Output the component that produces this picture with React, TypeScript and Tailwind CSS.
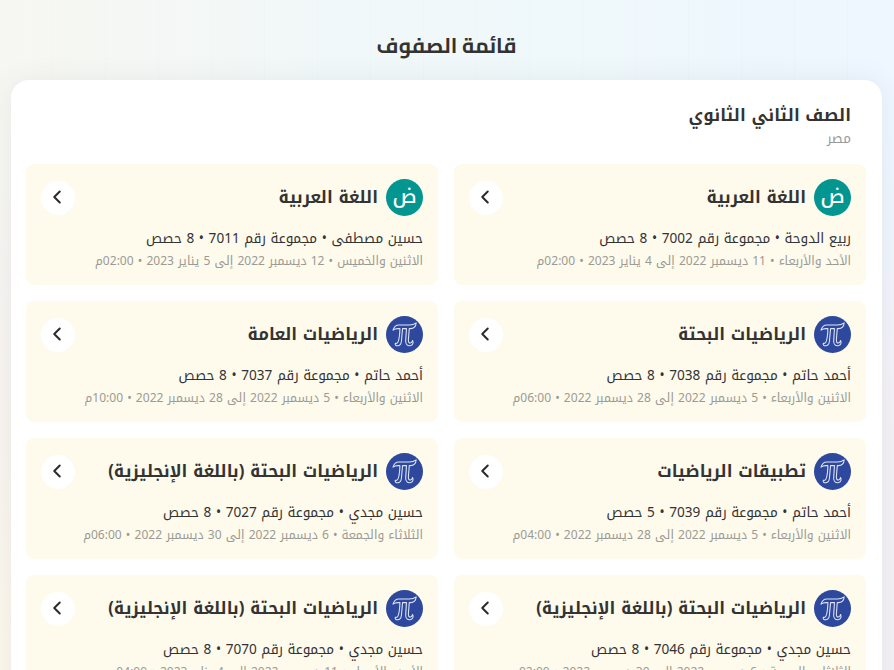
import { ChevronLeft } from "lucide-react";

type Subject = "arabic" | "math";
type Group = { subject: Subject; title: string; info: string; schedule: string };

const groups: Group[] = [
  { subject: "arabic", title: "اللغة العربية", info: "ربيع الدوحة • مجموعة رقم 7002 • 8 حصص", schedule: "الأحد والأربعاء • 11 ديسمبر 2022 إلى 4 يناير 2023 • 02:00م" },
  { subject: "arabic", title: "اللغة العربية", info: "حسين مصطفى • مجموعة رقم 7011 • 8 حصص", schedule: "الاثنين والخميس • 12 ديسمبر 2022 إلى 5 يناير 2023 • 02:00م" },
  { subject: "math", title: "الرياضيات البحتة", info: "أحمد حاتم • مجموعة رقم 7038 • 8 حصص", schedule: "الاثنين والأربعاء • 5 ديسمبر 2022 إلى 28 ديسمبر 2022 • 06:00م" },
  { subject: "math", title: "الرياضيات العامة", info: "أحمد حاتم • مجموعة رقم 7037 • 8 حصص", schedule: "الاثنين والأربعاء • 5 ديسمبر 2022 إلى 28 ديسمبر 2022 • 10:00م" },
  { subject: "math", title: "تطبيقات الرياضيات", info: "أحمد حاتم • مجموعة رقم 7039 • 5 حصص", schedule: "الاثنين والأربعاء • 5 ديسمبر 2022 إلى 28 ديسمبر 2022 • 04:00م" },
  { subject: "math", title: "الرياضيات البحتة (باللغة الإنجليزية)", info: "حسين مجدي • مجموعة رقم 7027 • 8 حصص", schedule: "الثلاثاء والجمعة • 6 ديسمبر 2022 إلى 30 ديسمبر 2022 • 06:00م" },
  { subject: "math", title: "الرياضيات البحتة (باللغة الإنجليزية)", info: "حسين مجدي • مجموعة رقم 7046 • 8 حصص", schedule: "الثلاثاء والجمعة • 6 ديسمبر 2022 إلى 30 ديسمبر 2022 • 02:00م" },
  { subject: "math", title: "الرياضيات البحتة (باللغة الإنجليزية)", info: "حسين مجدي • مجموعة رقم 7070 • 8 حصص", schedule: "الأحد والأربعاء • 11 ديسمبر 2022 إلى 4 يناير 2023 • 04:00م" },
];

function SubjectIcon({ subject }: { subject: Subject }) {
  if (subject === "arabic") {
    return (
      <span className="flex size-[37px] shrink-0 items-center justify-center rounded-full bg-[#039590] text-[20px] leading-[30px] font-medium text-white">
        <span className="-mt-1">ض</span>
      </span>
    );
  }
  return (
    <svg viewBox="0 0 38 38" className="size-[37px] shrink-0" fill="none">
      <circle cx="19" cy="19" r="19" fill="#2d489d" />
      <path
        d="M7.2 14.6C8.2 10.7 9.9 9.2 13.2 9.2H24C27 9.2 28.8 8.6 31 7C30.7 11.2 28.4 13 25 13H23.9L23 24.3C22.8 26.8 23.7 28 25.2 27.7C26.7 27.4 26.9 26.2 27.3 25.2C28.5 27.4 27.5 29.6 25.4 30.4C22.4 31.3 20 29.3 20.2 25.8L21 13H17L15.8 26.2C15.4 29 14.1 30.6 12 30.6C9.9 30.6 9 29.4 9.6 28C10.4 28.3 11.6 28 12.3 26.6C13.5 24 14.1 18.6 14.3 13H12.3C9.8 13 8.6 13.4 7.2 14.6Z"
        stroke="#dfe5f6"
        strokeWidth="1.1"
        strokeLinejoin="round"
      />
    </svg>
  );
}

function GroupCard({ group }: { group: Group }) {
  return (
    <article className="h-[121px] rounded-lg bg-[#fefaec] px-[15px] pt-[15px]">
      <div className="flex h-[37px] items-center gap-2">
        <SubjectIcon subject={group.subject} />
        <h3 className="grow scale-y-[1.04] text-[16.7px] leading-7 font-bold">{group.title}</h3>
        <span className="flex size-[34px] items-center justify-center rounded-full bg-white">
          <ChevronLeft className="mr-0.5 mb-0.5 size-[22px] text-[#2b2b2b]" strokeWidth={2.2} />
        </span>
      </div>
      <p className="mt-[11px] scale-y-[1.04] text-[13.6px] leading-[23px]">{group.info}</p>
      <p className="scale-y-[1.04] text-[12.06px] leading-[22px] text-[#9b9a94]">{group.schedule}</p>
    </article>
  );
}

export default function App() {
  return (
    <div
      dir="rtl"
      className="h-[670px] overflow-hidden bg-[repeating-linear-gradient(to_right,transparent_0px,transparent_52px,rgba(90,120,120,0.018)_52px,rgba(90,120,120,0.018)_53px),radial-gradient(ellipse_at_0%_95%,#fbf7ec_0%,transparent_50%),linear-gradient(to_bottom,transparent_20%,#f4f1f6_65%),linear-gradient(to_right,#f7f7f2_0%,#f1f8f9_40%,#eff8fb_68%,#eef6ff_95%)] pr-3 pl-[11px] font-['Noto_Kufi_Arabic','Noto_Sans',sans-serif] text-[#333]"
    >
      <h1 className="flex h-20 items-center justify-center pt-[11px] font-['Cairo','Noto_Kufi_Arabic',sans-serif] text-[21px] font-bold">
        قائمة الصفوف
      </h1>
      <main className="h-[640px] rounded-[18px] bg-white px-4 pt-[22px] pl-[15px] shadow-[0_0_28px_rgba(60,80,80,0.08)]">
        <header className="h-[62px] px-[15px]">
          <h2 className="scale-y-[1.04] text-[16.7px] leading-7 font-bold">الصف الثاني الثانوي</h2>
          <p className="-mt-px text-[13.6px] leading-5 text-[#999]">مصر</p>
        </header>
        <div className="grid grid-cols-2 gap-4">
          {groups.map((group, i) => (
            <GroupCard key={i} group={group} />
          ))}
        </div>
      </main>
    </div>
  );
}
